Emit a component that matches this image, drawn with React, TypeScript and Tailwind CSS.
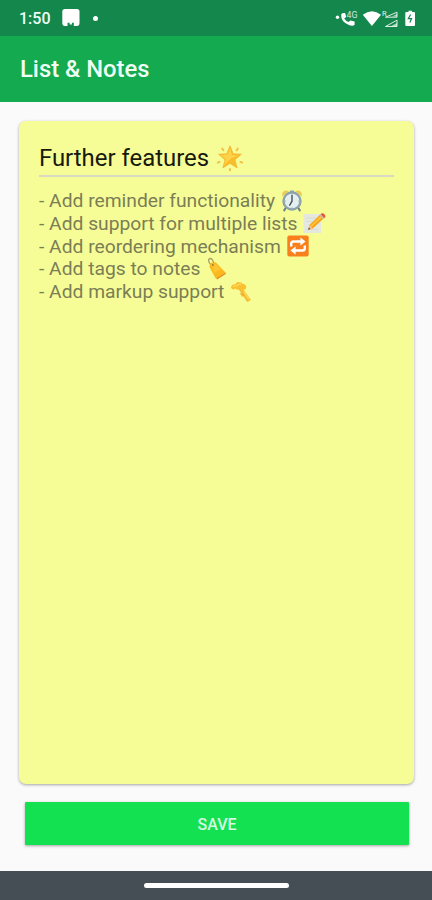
import { FC, ReactNode } from 'react';

interface NoteItem {
  text: string;
  icon: ReactNode;
}

const StarIcon = () => (
  <svg width="28" height="28" viewBox="0 0 28 28" className="shrink-0">
    <g stroke="#efc044" strokeWidth="1.9" strokeLinecap="round">
      <path d="M6.2 4.6l1.2 1.7M21.8 4.6l-1.2 1.7M1.8 18.6l1.8-.7M26.2 18.6l-1.8-.7M14 25v1.4" />
    </g>
    <path
      d="M14 1.8l3.2 8 8.2.4-6.4 5.6 2.1 8.1-7.1-4.5-7.1 4.5L9 15.8l-6.4-5.6 8.2-.4z"
      fill="#f9bd2b"
      stroke="#f0b232"
      strokeWidth=".7"
      strokeLinejoin="round"
    />
    <path d="M14 4l2 7 5.8.4-6.7 3.2-7 6.5 1.7-5.9-5-4.1 6.9-.6z" fill="#ffdc55" opacity=".7" />
  </svg>
);

const ClockIcon = () => (
  <svg width="22" height="23" viewBox="0 0 22 23">
    <path d="M5.2 18l-2 3.4M16.8 18l2 3.4" stroke="#65808b" strokeWidth="2" strokeLinecap="round" />
    <path d="M1.3 7.2C-.2 3.2 4.5-.4 8 2.6zM20.7 7.2C22.2 3.2 17.5-.4 14 2.6z" fill="#ebcd55" />
    <path d="M9 1.5h4v3H9z" fill="#8ba0a6" />
    <circle cx="11" cy="12" r="8.5" fill="#e6efef" stroke="#8ea4aa" strokeWidth="2.4" />
    <path d="M11 6.2v6l-2.3 4" fill="none" stroke="#43535b" strokeWidth="1.4" strokeLinecap="round" />
    <path d="M16.9 12h.8M4.3 12h.8M11 18v.7" stroke="#93a4aa" />
  </svg>
);

const MemoIcon = () => (
  <svg width="23" height="22" viewBox="0 0 23 22">
    <path d="M.5 2h17.5v19H.5z" fill="#e5e8df" />
    <path d="M3 6h10M3 9.5h6M3 17.5h12" stroke="#d3d8d0" strokeWidth=".8" />
    <path d="M5.2 17.8l1.4-5L17 2.8l3.6 3.8L9.8 16.5z" fill="#f9a51b" />
    <path d="M8 14.2L18.4 4.6" stroke="#ffc83d" strokeWidth="1.5" />
    <path d="M5.2 17.8l1.4-5 3.2 3.7z" fill="#efc28b" />
    <path d="M5.2 17.8l.7-2.4 1.5 1.6z" fill="#46413b" />
    <path d="M16.4 3.4l1.2-1.1 3.6 3.8L20 7.2z" fill="#c9b9a8" />
    <path d="M17.6 2.3l.9-.8c1.9-1.1 4.8 2 3.6 3.9l-.9.7z" fill="#e75536" />
  </svg>
);

const RepeatIcon = () => (
  <svg width="22" height="22" viewBox="0 0 22 22">
    <rect x=".3" y=".5" width="21.4" height="21" rx="2" fill="#f7801d" />
    <path d="M4.2 11.5V8.8q0-2.3 2.3-2.3h8M17.8 10.5v2.7q0 2.3-2.3 2.3h-8" fill="none" stroke="#fff" strokeWidth="2.4" />
    <path d="M13.4 2.4l5.2 4.1-5.2 4.1zM8.6 11.4l-5.2 4.1 5.2 4.1z" fill="#fff" />
  </svg>
);

const TagIcon = () => (
  <svg width="22" height="23" viewBox="0 0 22 23">
    <path d="M5.8 8.5C3 6.5 1.7 2.6 3.6 1.7s3.8 1.6 4.1 5" fill="none" stroke="#aaa063" strokeWidth="1.3" />
    <path d="M3.2 9.6l2.2-3.8 4.3-.5 9.8 10.2-8.6 6.2-1.5-.6z" fill="#fcb91f" />
    <path d="M5.6 7.5l4-.8 5.2 5.6-6.6 3.6z" fill="#ffca38" opacity=".7" />
    <path d="M10.4 21.3l9.1-5.8.3 1.6-8.7 5.3z" fill="#e58f22" />
    <circle cx="6.9" cy="8" r="1" fill="#a77a2a" />
  </svg>
);

const PartAlternationIcon = () => (
  <svg width="23" height="22" viewBox="0 0 23 22">
    <path
      d="M.8 6.8Q1.8 3 5.2 3.4 6.6.3 9.6 1.2q2.4-.3 2.7 1.5 3.2.2 4 3.1l-.6 2.4-2.2.5 7.4 10.1-3 2.3L9.5 8.2l-3 .6-.8-1.6q-2.3 2.6-4.9-.4z"
      fill="#fcc02f"
    />
    <path d="M9.7 12.2l3.8-.4 1.6 2.3-2.8 1.8z" fill="#f8ba30" />
    <path d="M3 5.5q2-1.2 4-.5 1.8-2.5 4.2-1.7M14 11.3l5 6.9" fill="none" stroke="#ffdb67" strokeWidth="1.1" />
    <path d="M8.8 7.6l8.6 13" stroke="#e8a42e" strokeWidth=".8" />
  </svg>
);

const notes: NoteItem[] = [
  { text: '- Add reminder functionality', icon: <ClockIcon /> },
  { text: '- Add support for multiple lists', icon: <MemoIcon /> },
  { text: '- Add reordering mechanism', icon: <RepeatIcon /> },
  { text: '- Add tags to notes', icon: <TagIcon /> },
  { text: '- Add markup support', icon: <PartAlternationIcon /> },
];

const StatusBar: FC = () => (
  <div className="flex h-9 shrink-0 items-center bg-[#14874d] pl-[19px] pr-[15px] text-[#effff4]">
    <span className="w-[33px] pt-px text-[16px] font-medium leading-none">1:50</span>
    <svg width="18" height="18" viewBox="0 0 18 18" className="ml-[10px]">
      <path d="M3 0h12q2.5 0 2.5 2.5V14q0 3-2.8 3h-2.9v-3.2H9.9v1.6H7.6v-1.6H5.5V17H3q-2.7 0-2.7-3V2.5Q.3 0 3 0z" fill="#fff" />
    </svg>
    <span className="ml-[13px] h-[5px] w-[5px] rounded-full bg-white" />
    <svg width="82" height="22" viewBox="0 0 82 22" className="ml-auto" fill="#fff">
      <circle cx="2.5" cy="10.2" r="1.7" />
      <path d="M7.2 6.2l3-.3.9 4-1.9 1.7q1.7 2.8 4.4 3.4l1.8-1.6 4.2 1.2v3.2q-1.4 1.5-5.2.5Q5.5 14.8 6.2 7.5z" />
      <text x="11.5" y="11" fontSize="8.8" fontFamily="Roboto, sans-serif" opacity=".8">4G</text>
      <path d="M27.8 7.8q9-7 18.2 0L36.9 19z" />
      <path d="M50.5 10.2l11.5-5v5zM50.5 19.5l11.5-6.3v6.3z" fill="none" stroke="#fff" strokeWidth="1" opacity=".85" />
      <path d="M57 9.5l5-2.5v2.5zM56 19l6-3v3z" opacity=".65" />
      <text x="47" y="9" fontSize="7.5" fontFamily="Roboto, sans-serif" opacity=".9">R</text>
      <path d="M71.3 5.1h2.2V3.7H77v1.4h2q1 0 1 1V18q0 1-1 1h-7.7q-1 0-1-1V6.1q0-1 1-1z" />
      <path d="M75.6 7.5l-2.3 4.2h3.2l-1.6 3.8" fill="none" stroke="#14874d" strokeWidth="1.2" />
    </svg>
  </div>
);

const NoteCard: FC = () => (
  <div className="ml-[19px] mr-[18px] mt-[19px] h-[663px] shrink-0 rounded-[7px] bg-[#f6fd97] px-5 pt-5 shadow-[0_1px_3px_rgba(0,0,0,0.35)]">
    <div className="flex h-[36px] items-center border-b-2 border-[#d8d9c3]">
      <h2 className="w-[171px] whitespace-nowrap text-[23.9px] leading-8 text-[#171a0c]">Further features</h2>
      <span className="ml-[6px]"><StarIcon /></span>
    </div>
    <ul className="pt-3 text-[19.25px] leading-[23px] text-[#7b7e55]">
      {notes.map((note) => (
        <li key={note.text} className="flex h-[22.8px] items-center whitespace-nowrap">
          <span>{note.text}</span>
          <span className="ml-[6px]">{note.icon}</span>
        </li>
      ))}
    </ul>
  </div>
);

export default function App() {
  return (
    <div className="flex h-[900px] w-[432px] flex-col overflow-hidden bg-[#fafafa] font-[Roboto,sans-serif]">
      <StatusBar />
      <header className="flex h-[66px] shrink-0 items-center bg-[#13aa50] pl-5 pt-px">
        <h1 className="text-[23.8px] font-medium leading-none text-[#effff4]">List &amp; Notes</h1>
      </header>
      <NoteCard />
      <button className="ml-[25px] mt-[18px] h-[43px] w-[384px] shrink-0 rounded-[1px] bg-[#13e151] pt-0.5 text-[16px] font-medium text-[#d5fbe0] shadow-[0_1px_3px_rgba(0,0,0,0.35)]">
        SAVE
      </button>
      <div className="mt-auto flex h-[29px] items-center justify-center bg-[#454e55]">
        <div className="h-[5px] w-[145px] rounded-full bg-white" />
      </div>
    </div>
  );
}
